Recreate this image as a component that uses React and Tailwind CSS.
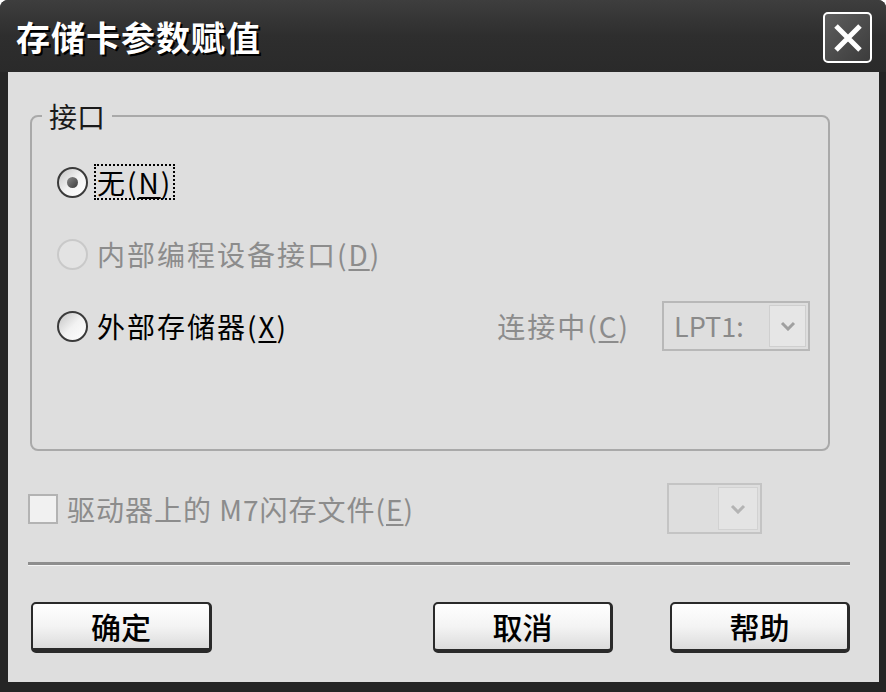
import React from 'react';

const font = { fontFamily: '"Noto Sans CJK SC", "Noto Sans", sans-serif' };

const Radio = ({ checked, disabled }) => (
  <span
    className={
      'flex h-[31px] w-[31px] shrink-0 items-center justify-center rounded-full border-2 ' +
      (disabled
        ? 'border-[#c9c9c9] bg-[#e3e3e3]'
        : 'border-[#3a3a3a] bg-gradient-to-br from-[#c4c4c4] via-[#f2f2f2] to-white')
    }
  >
    {checked && (
      <span className="h-[11px] w-[11px] rounded-full bg-gradient-to-br from-[#8a8a8a] to-[#3d3d3d]" />
    )}
  </span>
);

const Key = ({ children }) => <span className="underline underline-offset-[3px]">{children}</span>;

const Chevron = ({ color }) => (
  <svg width="16" height="10" viewBox="0 0 16 10">
    <path d="M2 2 L8 8 L14 2" fill="none" stroke={color} strokeWidth="3" />
  </svg>
);

const Button = ({ label, isDefault }) => (
  <button
    className={
      'flex h-[51px] items-center justify-center rounded-[5px] border-2 border-[#2a2a2a] bg-gradient-to-b from-white via-[#f4f4f4] to-[#dcdcdc] text-[30px] font-medium text-black ' +
      (isDefault ? 'w-[181px] border-b-[5px] border-r-[3px]' : 'w-[180px] border-b-[4px] border-r-[3px]')
    }
  >
    {label}
  </button>
);

export default function App() {
  return (
    <div className="h-[692px] w-[886px] bg-white" style={font}>
      <div className="flex h-full flex-col rounded-t-[8px] bg-[#252525]">
        <div className="flex h-[72px] shrink-0 items-center justify-between rounded-t-[8px] bg-gradient-to-b from-[#3e3e3e] via-[#2e2e2e] to-[#2a2a2a] pl-[16px] pr-[14px]">
          <span className="text-[34px] font-bold tracking-[1px] text-white [text-shadow:2px_2px_0_#000]">
            存储卡参数赋值
          </span>
          <span className="mt-[3px] flex h-[51px] w-[49px] items-center justify-center rounded-[5px] border-2 border-white bg-gradient-to-br from-[#5e5e5e] to-[#3c3c3c]">
            <svg width="30" height="28" viewBox="0 0 30 28">
              <path d="M3 2 L27 26 M27 2 L3 26" stroke="white" strokeWidth="5" />
            </svg>
          </span>
        </div>

        <div className="mb-[10px] ml-[8px] mr-[7px] flex-1 bg-[#dedede]">
          <fieldset className="ml-[22px] mt-[29px] h-[350px] w-[800px] rounded-[8px] border-2 border-[#a9a9a9] pl-[25px] pr-[18px] pt-[29px]">
            <legend className="-ml-[15px] px-[7px] text-[28px] leading-[30px] text-[#1a1a1a]">接口</legend>

            <div className="flex h-[44px] items-center text-[28px] tracking-[2px] text-black">
              <Radio checked />
              <span className="ml-[6px] border-2 border-dotted border-black px-[1px] leading-[32px]">
                无(<Key>N</Key>)
              </span>
            </div>

            <div className="mt-[28px] flex h-[44px] items-center text-[28px] tracking-[2px] text-[#8c8c8c]">
              <Radio disabled />
              <span className="ml-[9px]">
                内部编程设备接口(<Key>D</Key>)
              </span>
            </div>

            <div className="mt-[28px] flex h-[44px] items-center text-[28px] tracking-[2px]">
              <Radio />
              <span className="ml-[9px] text-black">
                外部存储器(<Key>X</Key>)
              </span>
              <span className="ml-auto text-[#8c8c8c]">
                连接中(<Key>C</Key>)
              </span>
              <div className="ml-[32px] flex h-[50px] w-[148px] items-stretch border-2 border-[#b8b8b8] bg-[#dedede] p-[2px] tracking-normal">
                <span className="flex flex-1 items-center pl-[8px] text-[27px] text-[#8a8a8a]">LPT1:</span>
                <span className="flex w-[37px] items-center justify-center border border-[#cfcfcf] bg-[#e6e6e6]">
                  <Chevron color="#a0a0a0" />
                </span>
              </div>
            </div>
          </fieldset>

          <div className="ml-[20px] mt-[32px] flex h-[51px] w-[734px] items-center text-[28px] tracking-[1px] text-[#8c8c8c]">
            <span className="h-[30px] w-[30px] shrink-0 border-2 border-[#b3b3b3] bg-[#f1f1f1]" />
            <span className="ml-[9px]">
              驱动器上的 M7闪存文件(<Key>E</Key>)
            </span>
            <div className="ml-auto flex h-[51px] w-[95px] items-stretch border-2 border-[#c4c4c4] bg-[#dedede] p-[2px]">
              <span className="flex-1" />
              <span className="flex w-[40px] items-center justify-center border border-[#d2d2d2] bg-[#e4e4e4]">
                <Chevron color="#b4b4b4" />
              </span>
            </div>
          </div>

          <div className="ml-[20px] mt-[28px] w-[822px] border-t-[3px] border-b border-t-[#8e8e8e] border-b-[#f4f4f4]" />

          <div className="ml-[23px] mt-[36px] flex w-[819px] items-center">
            <Button label="确定" isDefault />
            <div className="ml-auto flex gap-[57px]">
              <Button label="取消" />
              <Button label="帮助" />
            </div>
          </div>
        </div>
      </div>
    </div>
  );
}
